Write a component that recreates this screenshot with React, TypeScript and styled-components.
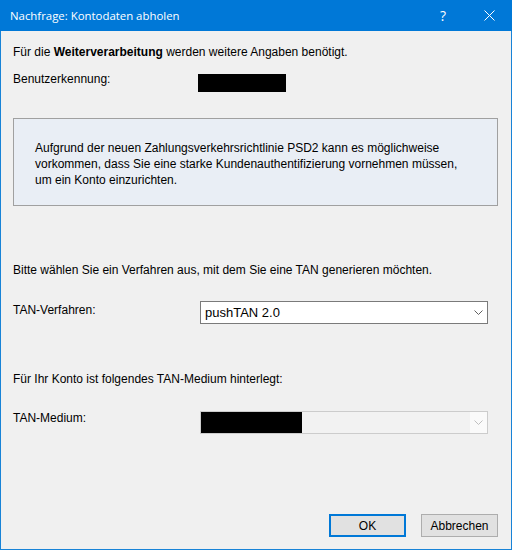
import React, { FC } from 'react'
import styled, { createGlobalStyle } from 'styled-components'

const GlobalStyle = createGlobalStyle`
  html, body {
    margin: 0;
    padding: 0;
    background: #ffffff;
  }
  body {
    font-family: 'Liberation Sans', Arial, sans-serif;
  }
`

const Window = styled.div`
  width: 512px;
  height: 550px;
  box-sizing: border-box;
  display: flex;
  flex-direction: column;
  border: 1px solid #1883d7;
  border-top: none;
  background: #f0f0f0;
`

const TitleBar = styled.div`
  height: 31px;
  flex: none;
  margin: 0 -1px;
  background: #0078d7;
  color: #ffffff;
  display: flex;
  align-items: center;
  padding-left: 10px;
  font-family: 'Open Sans', 'Noto Sans', sans-serif;
  font-size: 11.4px;
`

const Title = styled.div`
  flex: 1;
  white-space: nowrap;
`

const TitleButton = styled.div`
  width: 46px;
  height: 31px;
  display: flex;
  align-items: center;
  justify-content: center;
  font-size: 14px;
`

const Content = styled.div`
  flex: 1;
  display: flex;
  flex-direction: column;
  padding: 0 13px 12px 12px;
  font-size: 12px;
  line-height: 16px;
  color: #000000;
`

const Text = styled.div<{ $top: number }>`
  margin-top: ${(p) => p.$top}px;
  white-space: nowrap;
`

const Row = styled.div<{ $top: number }>`
  margin-top: ${(p) => p.$top}px;
  display: flex;
  align-items: flex-start;
`

const Label = styled.div<{ $offset?: number; $width?: number }>`
  width: ${(p) => p.$width ?? 187}px;
  flex: none;
  margin-top: ${(p) => p.$offset ?? 0}px;
`

const Redacted = styled.div<{ $w: number; $h: number; $offset?: number }>`
  width: ${(p) => p.$w}px;
  height: ${(p) => p.$h}px;
  margin-top: ${(p) => p.$offset ?? 0}px;
  background: #000000;
`

const InfoBox = styled.div`
  margin-top: 26px;
  height: 88px;
  box-sizing: border-box;
  border: 1px solid #a0a0a0;
  background: #e9eef5;
  padding: 21px 20px 0 21px;
`

const Combo = styled.div<{ $disabled?: boolean; $offset?: number }>`
  width: 288px;
  height: 23px;
  box-sizing: border-box;
  margin-top: ${(p) => p.$offset ?? 0}px;
  border: 1px solid ${(p) => (p.$disabled ? '#cccccc' : '#7a7a7a')};
  background: ${(p) => (p.$disabled ? '#f2f2f2' : '#ffffff')};
  display: flex;
  align-items: stretch;
`

const ComboValue = styled.div<{ $bare?: boolean }>`
  flex: 1;
  display: flex;
  align-items: center;
  padding-left: ${(p) => (p.$bare ? 0 : 4)}px;
  font-size: 13px;
`

const ComboArrow = styled.div<{ $disabled?: boolean }>`
  width: 17px;
  flex: none;
  display: flex;
  align-items: center;
  justify-content: center;
  background: ${(p) => (p.$disabled ? '#fafafa' : 'transparent')};
  color: ${(p) => (p.$disabled ? '#bfbfbf' : '#606060')};
`

const Footer = styled.div`
  margin-top: auto;
  display: flex;
  justify-content: flex-end;
  gap: 15px;
`

const Button = styled.button<{ $default?: boolean }>`
  width: 77px;
  height: 23px;
  box-sizing: border-box;
  margin: 0;
  padding: 0;
  background: #e1e1e1;
  border: ${(p) => (p.$default ? '2px solid #0078d7' : '1px solid #adadad')};
  font-family: 'Liberation Sans', Arial, sans-serif;
  font-size: 12px;
  color: #000000;
`

const Chevron: FC = () => (
  <svg width="9" height="5" viewBox="0 0 9 5">
    <polyline points="0.5,0.5 4.5,4.5 8.5,0.5" fill="none" stroke="currentColor" strokeWidth="1" />
  </svg>
)

const CloseIcon: FC = () => (
  <svg width="11" height="11" viewBox="0 0 11 11">
    <path d="M0.5 0.5 L10.5 10.5 M10.5 0.5 L0.5 10.5" stroke="#ffffff" strokeWidth="1" />
  </svg>
)

const App: FC = () => {
  return (
    <>
      <GlobalStyle />
      <Window>
        <TitleBar>
          <Title>Nachfrage: Kontodaten abholen</Title>
          <TitleButton>?</TitleButton>
          <TitleButton>
            <CloseIcon />
          </TitleButton>
        </TitleBar>
        <Content>
          <Text $top={13}>
            Für die <b>Weiterverarbeitung</b> werden weitere Angaben benötigt.
          </Text>
          <Row $top={11}>
            <Label $width={185}>Benutzerkennung:</Label>
            <Redacted $w={88} $h={18} $offset={3} />
          </Row>
          <InfoBox>
            Aufgrund der neuen Zahlungsverkehrsrichtlinie PSD2 kann es möglichweise
            <br />
            vorkommen, dass Sie eine starke Kundenauthentifizierung vornehmen müssen,
            <br />
            um ein Konto einzurichten.
          </InfoBox>
          <Text $top={56}>Bitte wählen Sie ein Verfahren aus, mit dem Sie eine TAN generieren möchten.</Text>
          <Row $top={23}>
            <Label $offset={1}>TAN-Verfahren:</Label>
            <Combo>
              <ComboValue>pushTAN 2.0</ComboValue>
              <ComboArrow>
                <Chevron />
              </ComboArrow>
            </Combo>
          </Row>
          <Text $top={47}>Für Ihr Konto ist folgendes TAN-Medium hinterlegt:</Text>
          <Row $top={23}>
            <Label>TAN-Medium:</Label>
            <Combo $disabled $offset={1}>
              <ComboValue $bare>
                <Redacted $w={101} $h={21} />
              </ComboValue>
              <ComboArrow $disabled>
                <Chevron />
              </ComboArrow>
            </Combo>
          </Row>
          <Footer>
            <Button $default>OK</Button>
            <Button>Abbrechen</Button>
          </Footer>
        </Content>
      </Window>
    </>
  )
}

export default App
